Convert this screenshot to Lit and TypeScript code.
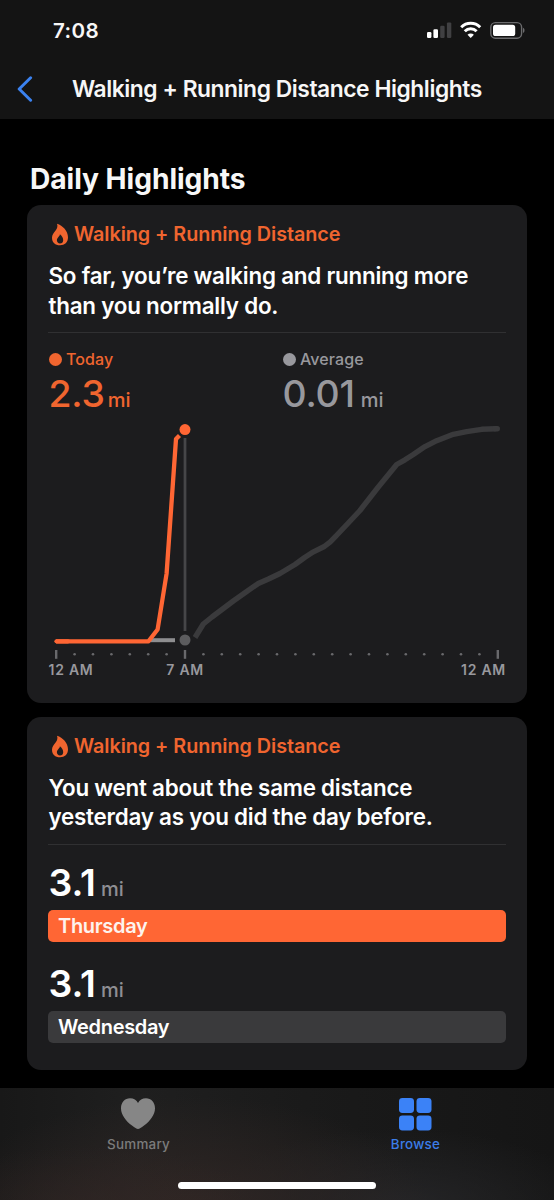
import { LitElement, html, css, svg } from "lit";
import { customElement, property } from "lit/decorators.js";

const ORANGE = "#ff6634";

// Hour ticks run from midnight to midnight in 24 equal steps.
const HOURS = Array.from({ length: 25 }, (_, h) => ({ h, x: 8.2 + h * 18.4 }));
const MAJOR = [0, 7, 24];

@customElement("status-bar")
class StatusBar extends LitElement {
  static styles = css`
    :host { display: flex; justify-content: space-between; align-items: flex-start; height: 62px; padding: 0 28px 0 53px; box-sizing: border-box; }
    .time { font-size: 20.6px; font-weight: 600; line-height: 26px; margin-top: 18px; letter-spacing: 0.4px; }
    svg { display: block; margin-top: 20px; }
  `;
  render() {
    return html`
      <span class="time">7:08</span>
      <svg width="100" height="20" viewBox="0 0 100 20">
        <g fill="#fff">
          <rect x="1" y="12" width="4.4" height="6" rx="1.2" />
          <rect x="7.4" y="9.2" width="4.6" height="8.8" rx="1.2" />
          <g fill="#404042">
            <rect x="14.2" y="5.8" width="4.4" height="12.2" rx="1.2" />
            <rect x="20.9" y="2.4" width="4.4" height="15.6" rx="1.2" />
          </g>
        </g>
        <g fill="none" stroke="#fff" stroke-width="3">
          <path d="M35.2 7.2a13.6 13.6 0 0 1 19 0" />
          <path d="M38.8 11.2a8.4 8.4 0 0 1 11.8 0" />
        </g>
        <path d="M44.7 18l-3.2-3.3a4.6 4.6 0 0 1 6.4 0z" fill="#fff" />
        <rect x="64.8" y="2.6" width="30.8" height="15.6" rx="4.6" fill="none" stroke="#6b6b6d" stroke-width="1.4" />
        <rect x="67" y="4.8" width="22.2" height="11.2" rx="2.6" fill="#fff" />
        <path d="M97 7.8c2 .9 2 4.3 0 5.2z" fill="#6b6b6d" />
      </svg>
    `;
  }
}

@customElement("nav-bar")
class NavBar extends LitElement {
  static styles = css`
    :host { display: flex; align-items: center; height: 57px; padding-left: 16px; box-sizing: border-box; }
    svg { display: block; margin-top: -4px; }
    .title { margin: -4px 0 0 39px; font-size: 22.8px; font-weight: 600; line-height: 30px; letter-spacing: -0.44px; white-space: nowrap; }
  `;
  render() {
    return html`
      <svg width="17" height="26" viewBox="0 0 17 26">
        <path d="M14.600 1.800L3.200 13L14.600 24.200" fill="none" stroke="#3b82f0" stroke-width="3" stroke-linecap="round" stroke-linejoin="round" />
      </svg>
      <span class="title">Walking + Running Distance Highlights</span>
    `;
  }
}

@customElement("highlight-card")
class HighlightCard extends LitElement {
  static styles = css`
    :host { display: block; box-sizing: border-box; border-radius: 14px; background: #1c1c1e; padding: 14px 21px 0 21px; }
    .head { display: flex; align-items: center; height: 30px; color: #f0652f; }
    .flame { display: block; margin: 1px 0 0 3px; }
    .label { margin: 0 0 0 5px; font-size: 19.8px; font-weight: 600; letter-spacing: -0.05px; white-space: nowrap; }
    .message { height: 60px; margin: 12px 0 0 0.500px; font-size: 22.4px; font-weight: 600; line-height: 29.6px; letter-spacing: -0.23px; color: #fff; white-space: nowrap; }
    .rule { height: 1px; margin-top: 11px; background: #303032; }
  `;
  @property({ attribute: false }) lines: string[] = [];
  render() {
    return html`
      <div class="head">
        <svg class="flame" width="18" height="23" viewBox="0 0 18 23">
          <path fill="#f0652f" fill-rule="evenodd" d="M6 .7C11.800 2.500 17 7.800 17 14.300C17 19.400 13.700 22.300 9 22.300C4.200 22.300 1 19.300 1 14.700C1 11.800 2.700 9.600 4.600 7.400C6.300 5.300 6.900 3.300 6 .7ZM8.900 11.200C9 13.400 5.900 14.300 5.900 17.300C5.900 19.300 7.200 20.500 9 20.500C10.900 20.500 12.200 19.200 12.200 17.200C12.200 14.700 11 12.700 8.900 11.200Z" />
        </svg>
        <span class="label">Walking + Running Distance</span>
      </div>
      <div class="message">${this.lines.map((l) => html`<div>${l}</div>`)}</div>
      <div class="rule"></div>
      <slot></slot>
    `;
  }
}

@customElement("distance-chart")
class DistanceChart extends LitElement {
  static styles = css`
    :host { display: block; }
    svg { display: block; overflow: visible; }
    text { font-size: 14px; font-weight: 600; fill: #98989d; letter-spacing: 0.75px; }
  `;
  render() {
    return html`
      <svg width="458" height="266" viewBox="0 0 458 266">
        <g fill="none" stroke-linejoin="round">
          <path d="M101.500 225.200H127" stroke="#8e8e90" stroke-width="4" />
          <path d="M137 23V216" stroke="#464648" stroke-width="2.800" />
          <path d="M147 222.500L155.300 209L164 202L174 194.500L185.300 186L198 177L210.300 168.500L220.500 164L232 158.500L247 149.500L257 142.200L265.500 136.800L276.300 131.500C281 128.500 285 124.500 288 121L300.300 108L312 95.500L330.300 72L348.700 49.500L357 44.800L365.300 39.500L377 31.600L388.700 25.700L405.300 19.300L418.700 16.700L433.700 14.300L447.500 13.700" stroke="#3a3a3c" stroke-width="5.400" />
          <path d="M447 13.700H449.300" stroke="#3a3a3c" stroke-width="5.400" stroke-linecap="round" />
          <path d="M8 226.300H100.500L109.600 214.500L118.600 158.500L128 24L131.500 20.500" stroke="${ORANGE}" stroke-width="4.300" />
          <path d="M8.500 226.300H20" stroke="${ORANGE}" stroke-width="4.300" stroke-linecap="round" />
        </g>
        <circle cx="137" cy="14.600" r="5.500" fill="${ORANGE}" />
        <circle cx="137" cy="225" r="5.500" fill="#5c5c5e" />
        ${HOURS.map(({ h, x }) =>
          MAJOR.includes(h)
            ? svg`<rect x=${x - 1.2} y="235" width="2.400" height="8.800" fill="#69696c" />`
            : svg`<circle cx=${x} cy="239.200" r="1.300" fill="#69696c" />`
        )}
        <text x="0.500" y="259.500">12 AM</text>
        <text x="137.200" y="259.500" text-anchor="middle">7 AM</text>
        <text x="458" y="259.500" text-anchor="end">12 AM</text>
      </svg>
    `;
  }
}

@customElement("app-root")
class AppRoot extends LitElement {
  static styles = css`
    :host { display: flex; flex-direction: column; width: 554px; height: 1200px; overflow: hidden; background: #000; color: #f7f7f7; font-family: Inter, "Liberation Sans", sans-serif; }
    .top { flex: none; height: 119px; background: #141414; }
    .content { flex: none; height: 969px; box-sizing: border-box; padding: 41px 27px 0 27px; }
    h1 { margin: 0 0 0 3px; font-size: 28.2px; line-height: 38px; font-weight: 700; letter-spacing: -0.06px; }
    .today { height: 497.500px; margin-top: 7px; }
    .compare { height: 353px; margin-top: 14px; }
    .stats { display: grid; grid-template-columns: 234px 1fr; padding-top: 15px; height: 81.500px; box-sizing: border-box; }
    .orange { color: #f0652f; }
    .gray { color: #98989d; }
    .key { display: flex; align-items: center; gap: 4px; height: 22px; margin-left: 1px; font-size: 16px; font-weight: 500; letter-spacing: 0.1px; }
    .dot { width: 13px; height: 13px; border-radius: 50%; background: currentColor; }
    .value { display: flex; align-items: baseline; height: 48px; margin-left: 0.500px; line-height: 48px; font-size: 37.400px; font-weight: 500; letter-spacing: -0.2px; }
    .unit { margin-left: 4px; font-size: 20px; font-weight: 500; letter-spacing: 0; }
    .orange .unit { margin-left: 3px; }
    .gray .unit { margin-left: 6px; }
    .row { color: #fff; }
    .first { margin-top: 14px; }
    .second { margin-top: 18px; }
    .row .value { font-weight: 600; letter-spacing: 0; }
    .row .unit { color: #8e8e93; margin-left: 5px; }
    .bar { display: flex; align-items: center; height: 32px; margin-top: 3px; padding-left: 10px; border-radius: 5px; font-size: 20px; font-weight: 600; letter-spacing: -0.32px; }
    .thu { background: #ff6634; color: #fdf3ee; }
    .wed { background: #3a3a3c; }
    .tabs { flex: none; height: 112px; display: grid; grid-template-columns: 1fr 1fr; grid-template-rows: 70px 1fr;
      background: radial-gradient(ellipse 170px 60px at 90px 118px, #33272580, #33272500), radial-gradient(ellipse 240px 110px at 190px 118px, #2f2624, #2f262400), radial-gradient(ellipse 200px 80px at 400px 120px, #252527, #25252700), linear-gradient(90deg, #181818, #1f1f1f 25%, #1a1a1a 55%, #151515); }
    .tab { display: flex; flex-direction: column; align-items: center; padding-top: 9px; font-size: 13.400px; font-weight: 500; letter-spacing: 0.25px; color: #7c7c7c; }
    .tab svg { display: block; margin: 0 1px 5px 0; }
    .tab span { line-height: 18px; }
    .tab.active svg { margin-bottom: 4px; }
    .active { color: #3b7de8; }
    .home { grid-column: 1 / -1; justify-self: center; width: 198px; height: 7px; margin-top: 24.300px; border-radius: 4px; background: #fff; }
  `;
  render() {
    return html`
      <div class="top"><status-bar></status-bar><nav-bar></nav-bar></div>
      <div class="content">
        <h1>Daily Highlights</h1>
        <highlight-card class="today" .lines=${["So far, you’re walking and running more", "than you normally do."]}>
          <div class="stats">
            <div class="orange">
              <div class="key"><i class="dot"></i>Today</div>
              <div class="value"><span>2.3</span><span class="unit">mi</span></div>
            </div>
            <div class="gray">
              <div class="key"><i class="dot"></i>Average</div>
              <div class="value"><span>0.01</span><span class="unit">mi</span></div>
            </div>
          </div>
          <distance-chart></distance-chart>
        </highlight-card>
        <highlight-card class="compare" .lines=${["You went about the same distance", "yesterday as you did the day before."]}>
          <div class="row first">
            <div class="value"><span>3.1</span><span class="unit">mi</span></div>
            <div class="bar thu">Thursday</div>
          </div>
          <div class="row second">
            <div class="value"><span>3.1</span><span class="unit">mi</span></div>
            <div class="bar wed">Wednesday</div>
          </div>
        </highlight-card>
      </div>
      <div class="tabs">
        <div class="tab">
          <svg width="36" height="33" viewBox="0 0 36 33">
            <path fill="#868686" d="M18 32C16.800 32 14.500 30.500 12.300 28.800C5.600 23.700 1 17.800 1 11.200C1 5.400 4.900 1.300 10 1.300C13.700 1.300 16.600 3.200 18 6.100C19.400 3.200 22.300 1.300 26 1.300C31.100 1.300 35 5.400 35 11.200C35 17.800 30.400 23.700 23.700 28.800C21.500 30.500 19.200 32 18 32Z" />
          </svg>
          <span>Summary</span>
        </div>
        <div class="tab active">
          <svg width="34" height="34" viewBox="0 0 34 34" fill="#3b82f7">
            <rect x="1" y="1" width="15" height="15" rx="3.400" />
            <rect x="18.500" y="1" width="15" height="15" rx="3.400" />
            <rect x="1" y="18.400" width="15" height="15" rx="3.400" />
            <rect x="18.500" y="18.400" width="15" height="15" rx="3.400" />
          </svg>
          <span>Browse</span>
        </div>
        <div class="home"></div>
      </div>
    `;
  }
}
